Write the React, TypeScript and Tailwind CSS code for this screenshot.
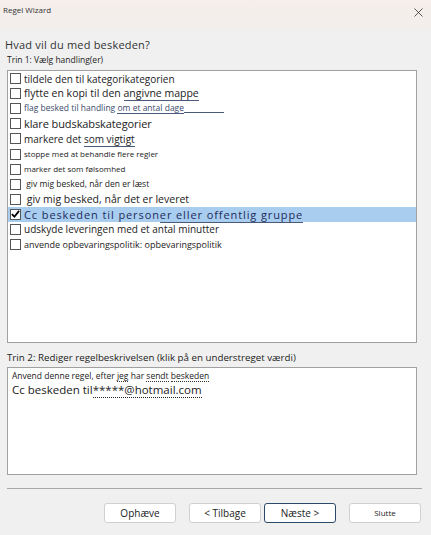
import { X } from 'lucide-react'

type Row = {
  parts: { t: string; u?: boolean }[]
  size: string
  color?: string
  checked?: boolean
  extra?: boolean
}

const rows: Row[] = [
  { parts: [{ t: 'tildele den til kategorikategorien' }], size: 'text-[10px]' },
  { parts: [{ t: 'flytte en kopi til den ' }, { t: 'angivne mappe', u: true }], size: 'text-[10.5px]' },
  {
    parts: [{ t: 'flag besked til handling ' }, { t: 'om et antal dage', u: true }],
    size: 'text-[8.5px]',
    color: 'text-[#3b4b6b]',
    extra: true,
  },
  { parts: [{ t: 'klare budskabskategorier' }], size: 'text-[11px] tracking-[-0.1px]' },
  { parts: [{ t: 'markere det ' }, { t: 'som vigtigt', u: true }], size: 'text-[10px]' },
  { parts: [{ t: 'stoppe med at behandle flere regler' }], size: 'text-[8px]' },
  { parts: [{ t: 'marker det som følsomhed' }], size: 'text-[8px]' },
  { parts: [{ t: ' giv mig besked, når den er læst' }], size: 'text-[8.5px]' },
  { parts: [{ t: ' giv mig besked, når det er leveret' }], size: 'text-[10.5px]' },
  {
    parts: [{ t: 'Cc beskeden til person' }, { t: 'er eller offentlig gruppe', u: true }],
    size: 'text-[11px] tracking-[0.9px]',
    color: 'text-[#1c2c5c]',
    checked: true,
  },
  { parts: [{ t: 'udskyde leveringen med et antal minutter' }], size: 'text-[10px]' },
  { parts: [{ t: 'anvende opbevaringspolitik: opbevaringspolitik' }], size: 'text-[9px]' },
]

function Box({ checked }: { checked?: boolean }) {
  return (
    <span className="w-[11px] h-[11px] shrink-0 border border-[#555] bg-white flex items-center justify-center">
      {checked && (
        <svg width="10" height="10" viewBox="0 0 10 10">
          <path d="M1 5.2 L3.8 8 L9 1.5" fill="none" stroke="#000" strokeWidth="2" />
        </svg>
      )}
    </span>
  )
}

function Btn({ label, focus, small }: { label: string; focus?: boolean; small?: boolean }) {
  return (
    <button
      className={`w-[72px] h-[20px] rounded-[3px] bg-white flex items-center justify-center text-[#222] ${
        small ? 'text-[8px]' : 'text-[10px]'
      } ${focus ? 'border border-[#2b4a6a]' : 'border border-[#d0d0d0]'}`}
    >
      {label}
    </button>
  )
}

export default function App() {
  return (
    <div
      className="w-[431px] h-[535px] bg-[#f0f0f0] flex flex-col text-[#222]"
      style={{ fontFamily: '"Open Sans", "Noto Sans", sans-serif' }}
    >
      {/* titlebar */}
      <div className="h-[30px] flex items-start justify-between pl-[3px] pr-[5px] pt-[4px] bg-gradient-to-b from-[#f6efeb] to-[#f1eeec]">
        <span className="text-[8px] text-[#333]">Regel Wizard</span>
        <X size={15} strokeWidth={1.2} className="text-[#222] mt-[1px]" />
      </div>

      <div className="px-[7px] pt-[7px] flex flex-col">
        <div className="text-[11px] leading-[16px] text-[#333] -ml-[2px] tracking-[0.2px]">
          Hvad vil du med beskeden?
        </div>
        <div className="text-[8.5px] leading-[12px] mt-[1px] mb-[4px]">Trin 1: Vælg handling(er)</div>

        <div className="w-[410px] h-[273px] bg-white border border-[#a0a0a0]">
          {rows.map((r, i) => (
            <div
              key={i}
              className={`h-[15.1px] flex items-center gap-[3px] pl-[2px] ${r.checked ? 'bg-[#a9cdef]' : ''}`}
            >
              <Box checked={r.checked} />
              <span className={`${r.size} ${r.color ?? 'text-[#222]'} whitespace-pre leading-none`}>
                {r.parts.map((p, j) => (
                  <span key={j} className={p.u ? 'border-b border-[#4a5a7a]' : ''}>
                    {p.t}
                  </span>
                ))}
                {r.extra && <span className="inline-block w-[40px] border-b border-[#4a5a7a]">&nbsp;</span>}
              </span>
            </div>
          ))}
        </div>

        <div className="text-[9.75px] leading-[12px] mt-[9px] mb-[3px]">
          Trin 2: Rediger regelbeskrivelsen (klik på en understreget værdi)
        </div>
        <div className="w-[410px] h-[108px] bg-white border border-[#a0a0a0] px-[4px] pt-[2px]">
          <div className="text-[8.5px] leading-[12px]">
            Anvend denne regel, efter{' '}
            <span className="border-b border-dotted border-[#333]">jeg</span> har{' '}
            <span className="border-b border-dotted border-[#333]">sendt</span>{' '}
            <span className="border-b border-dotted border-[#333]">beskeden</span>
          </div>
          <div className="text-[11.5px] leading-[15px]">
            Cc beskeden til<span className="border-b border-dotted border-[#222]">*****@hotmail.com</span>
          </div>
        </div>

        <div className="w-[415px] border-t border-[#a8a8a8] mt-[13px]" />

        <div className="flex justify-end gap-[13px] pr-[3px] mt-[14px]">
          <Btn label="Ophæve" />
          <div className="flex gap-[3px]">
            <Btn label="< Tilbage" />
            <Btn label="Næste >" focus />
          </div>
          <Btn label="Slutte" small />
        </div>
      </div>
    </div>
  )
}
